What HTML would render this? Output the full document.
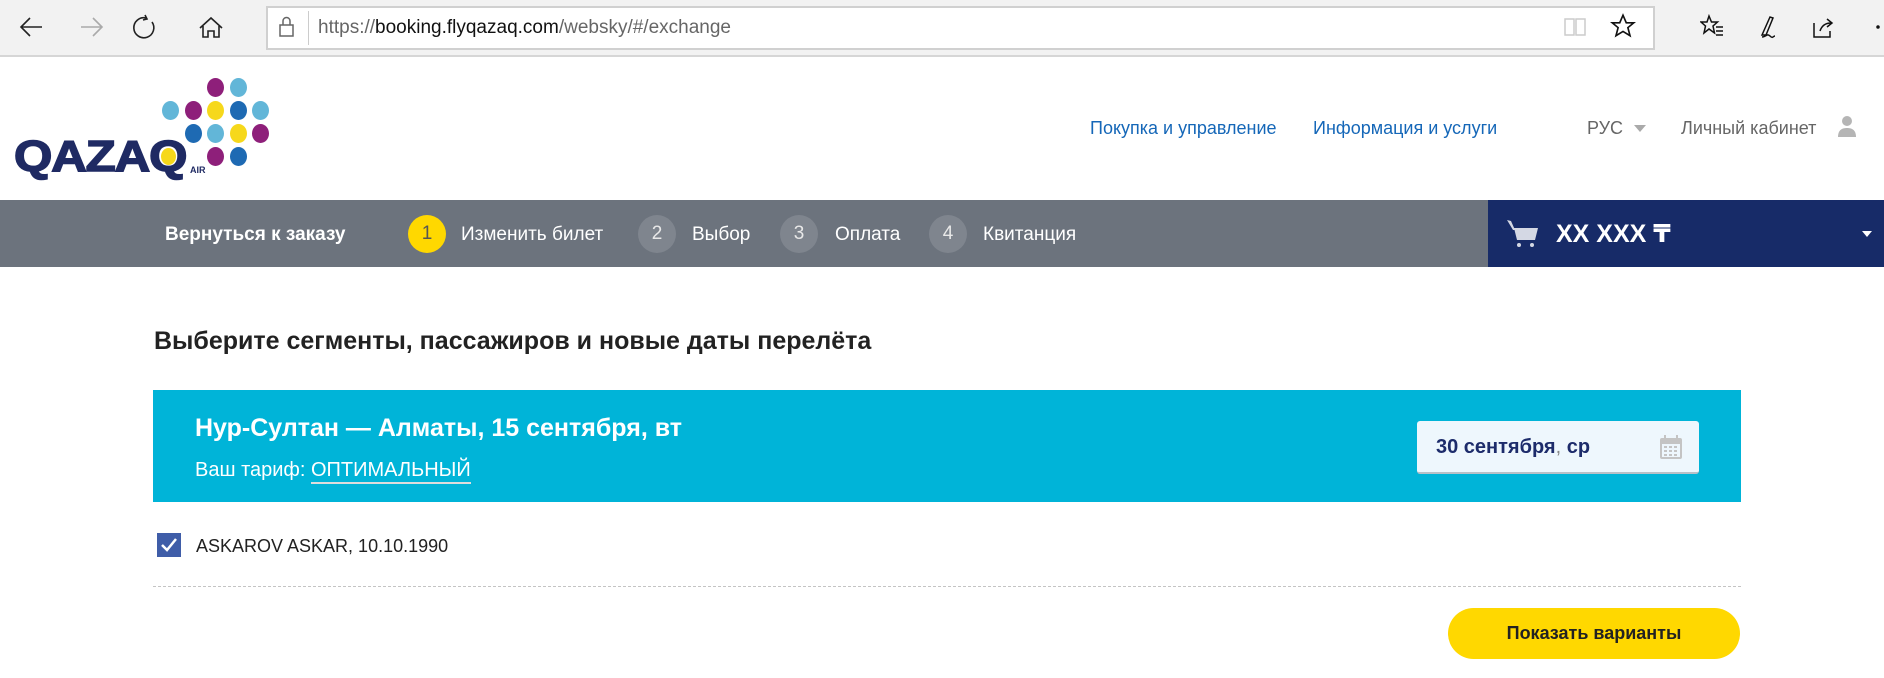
<!DOCTYPE html>
<html><head><meta charset="utf-8"><style>
*{margin:0;padding:0;box-sizing:border-box}
body{width:1884px;height:678px;overflow:hidden;background:#fff;font-family:"Liberation Sans","DejaVu Sans",sans-serif;position:relative}
.a{position:absolute;white-space:nowrap}
.tb{position:absolute;left:0;top:0;width:1884px;height:57px;background:#f2f2f2;border-bottom:2px solid #d6d6d6}
.addr{position:absolute;left:266px;top:6px;width:1389px;height:44px;background:#fff;border:2px solid #d0d0d0}
.nav{color:#1567b8;font-size:18px;top:118px}
.bar{position:absolute;left:0;top:200px;width:1884px;height:67px;background:#6c737d}
.nvy{position:absolute;left:1488px;top:200px;width:396px;height:67px;background:#172b68}
.c{position:absolute;width:38px;height:38px;border-radius:50%;background:#7f858e;color:#e8e8e8;font-size:19px;text-align:center;line-height:38px;top:215px}
.st{color:#fff;font-size:19px;top:224px}
.dot{position:absolute;width:17px;height:19px;border-radius:50%}
</style></head><body>
<div class="tb"></div>
<div class="addr"></div>
<svg class="a" style="left:18px;top:12px" width="230" height="30" viewBox="0 0 230 30" fill="none" stroke-width="1.6">
<path d="M24 15H4M12 6L3 15l9 9" stroke="#222"/>
<path d="M63 15h20M75 6l9 9-9 9" stroke="#aaa"/>
<path d="M128 6a10 10 0 1 0 6 4M127 3l2 4-4 1" stroke="#222"/>
<path d="M182 16l11-10 11 10M185 14v11h5v-6h6v6h5V14" stroke="#222"/>
</svg>
<svg class="a" style="left:278px;top:15px" width="18" height="24" viewBox="0 0 18 24" fill="none" stroke="#666" stroke-width="1.5"><rect x="2" y="10" width="13" height="11"/><path d="M5 10V6a3.5 3.5 0 0 1 7 0v4"/></svg>
<div class="a" style="left:308px;top:11px;width:1px;height:34px;background:#ccc"></div>
<div class="a" style="left:318px;top:17px;font-size:19px;color:#666">https://<span style="color:#111">booking.flyqazaq.com</span>/websky/#/exchange</div>
<svg class="a" style="left:1563px;top:15px" width="24" height="24" viewBox="0 0 24 24" fill="none" stroke="#ccc" stroke-width="1.5"><path d="M2 4h9v16H2zM13 4h9v16h-9z"/></svg>
<svg class="a" style="left:1610px;top:13px" width="26" height="26" viewBox="0 0 24 24" fill="none" stroke="#111" stroke-width="1.5"><path d="M12 2l3 7h7l-5.5 4.5 2 7.5L12 17l-6.5 4 2-7.5L2 9h7z"/></svg>
<svg class="a" style="left:1700px;top:13px" width="184" height="28" viewBox="0 0 184 28" fill="none" stroke="#111" stroke-width="1.5">
<path d="M9 3l2.5 6h6L13 13l1.5 7L9 16l-5 4 1.5-7L1 9h6zM16 14h7M16 18h7M16 22h7"/>
<path d="M62 22l8-18 3 1-7 17zM62 24c4 0 5-4 8-1s3 0 5 0"/>
<path d="M114 10v14h16v-6M120 18c2-6 6-8 11-8M127 6l5 4-5 4"/>
<circle cx="178" cy="14" r="1" fill="#111"/>
</svg>
<!-- logo -->
<div class="dot" style="left:207px;top:78px;background:#8e1f7a"></div>
<div class="dot" style="left:230px;top:78px;background:#62b6d8"></div>
<div class="dot" style="left:162px;top:101px;background:#62b6d8"></div>
<div class="dot" style="left:185px;top:101px;background:#8e1f7a"></div>
<div class="dot" style="left:207px;top:101px;background:#f6d81b"></div>
<div class="dot" style="left:230px;top:101px;background:#1e6ab3"></div>
<div class="dot" style="left:252px;top:101px;background:#62b6d8"></div>
<div class="dot" style="left:185px;top:124px;background:#1e6ab3"></div>
<div class="dot" style="left:207px;top:124px;background:#62b6d8"></div>
<div class="dot" style="left:230px;top:124px;background:#f6d81b"></div>
<div class="dot" style="left:252px;top:124px;background:#8e1f7a"></div>
<div class="dot" style="left:207px;top:147px;background:#8e1f7a"></div>
<div class="dot" style="left:230px;top:147px;background:#1e6ab3"></div>
<div class="a" style="left:14px;top:132px;font-size:44px;font-weight:bold;color:#1f2a63;letter-spacing:-1px;transform:scaleX(1.12);transform-origin:left;-webkit-text-stroke:1.5px #1f2a63">QAZAQ</div>
<div class="dot" style="left:161px;top:148px;width:15px;height:17px;background:#f6d81b"></div>
<div class="a" style="left:190px;top:165px;font-size:9px;font-weight:bold;color:#1f2a63">AIR</div>
<div class="a nav" style="left:1090px">Покупка и управление</div>
<div class="a nav" style="left:1313px">Информация и услуги</div>
<div class="a" style="left:1587px;top:118px;font-size:18px;color:#666">РУС</div>
<div class="a" style="left:1634px;top:125px;width:0;height:0;border:6px solid transparent;border-top:7px solid #aaa"></div>
<div class="a" style="left:1681px;top:118px;font-size:18px;color:#666">Личный кабинет</div>
<svg class="a" style="left:1837px;top:115px" width="20" height="22" viewBox="0 0 20 22" fill="#b5b5b5"><circle cx="10" cy="6" r="5"/><path d="M1 22c0-7 4-9 9-9s9 2 9 9z"/></svg>
<div class="bar"></div><div class="nvy"></div>
<div class="a" style="left:165px;top:224px;color:#fff;font-size:19px;font-weight:bold">Вернуться к заказу</div>
<div class="c" style="left:408px;background:#ffd800;color:#555">1</div>
<div class="a st" style="left:461px">Изменить билет</div>
<div class="c" style="left:638px">2</div>
<div class="a st" style="left:692px">Выбор</div>
<div class="c" style="left:780px">3</div>
<div class="a st" style="left:835px">Оплата</div>
<div class="c" style="left:929px">4</div>
<div class="a st" style="left:983px">Квитанция</div>
<svg class="a" style="left:1506px;top:218px" width="34" height="30" viewBox="0 0 34 30" fill="#d4d8e4"><path d="M1 2l4 1 4 9h-2zM8 10h24l-3 12H11z"/><circle cx="13" cy="27" r="2"/><circle cx="26" cy="27" r="2"/></svg>
<div class="a" style="left:1556px;top:219px;color:#fff;font-size:25px;font-weight:bold">XX XXX ₸</div>
<div class="a" style="left:1862px;top:231px;border:5px solid transparent;border-top:6px solid #fff"></div>
<div class="a" style="left:154px;top:327px;font-size:25px;font-weight:bold;color:#222">Выберите сегменты, пассажиров и новые даты перелёта</div>
<div class="a" style="left:153px;top:390px;width:1588px;height:112px;background:#00b4d8"></div>
<div class="a" style="left:195px;top:414px;font-size:25px;font-weight:bold;color:#fff">Нур-Султан — Алматы, 15 сентября, вт</div>
<div class="a" style="left:195px;top:459px;font-size:20px;color:#fff">Ваш тариф: <span style="border-bottom:2px solid #ddd;padding-bottom:1px">ОПТИМАЛЬНЫЙ</span></div>
<div class="a" style="left:1417px;top:421px;width:282px;height:53px;background:#eef7fd;border-radius:3px;border-bottom:2px solid #b8c0c8"></div>
<div class="a" style="left:1436px;top:436px;font-size:20px;font-weight:bold;color:#1d2c6b">30 сентября<span style="color:#888;font-weight:normal">,</span> ср</div>
<svg class="a" style="left:1659px;top:434px" width="24" height="26" viewBox="0 0 24 26" fill="#c4c4c4"><rect x="1" y="4" width="22" height="21" rx="2"/><rect x="3" y="10" width="18" height="13" fill="#eef7fd"/><rect x="5" y="1" width="2" height="6"/><rect x="17" y="1" width="2" height="6"/><g fill="#c4c4c4"><rect x="5" y="12" width="3" height="2"/><rect x="10" y="12" width="3" height="2"/><rect x="15" y="12" width="3" height="2"/><rect x="5" y="16" width="3" height="2"/><rect x="10" y="16" width="3" height="2"/><rect x="15" y="16" width="3" height="2"/><rect x="5" y="20" width="3" height="2"/><rect x="10" y="20" width="3" height="2"/><rect x="15" y="20" width="3" height="2"/></g></svg>
<div class="a" style="left:157px;top:533px;width:24px;height:24px;background:#3f5da8"></div>
<svg class="a" style="left:157px;top:533px" width="24" height="24" viewBox="0 0 24 24" fill="none" stroke="#fff" stroke-width="2.5"><path d="M5 12l5 5 9-11"/></svg>
<div class="a" style="left:196px;top:536px;font-size:18px;color:#222">ASKAROV ASKAR, 10.10.1990</div>
<div class="a" style="left:153px;top:586px;width:1588px;border-top:1px dashed #c4c4c4"></div>
<div class="a" style="left:1448px;top:608px;width:292px;height:51px;background:#ffd800;border-radius:26px;text-align:center;line-height:51px;font-size:18px;font-weight:bold;color:#222">Показать варианты</div>
</body></html>
